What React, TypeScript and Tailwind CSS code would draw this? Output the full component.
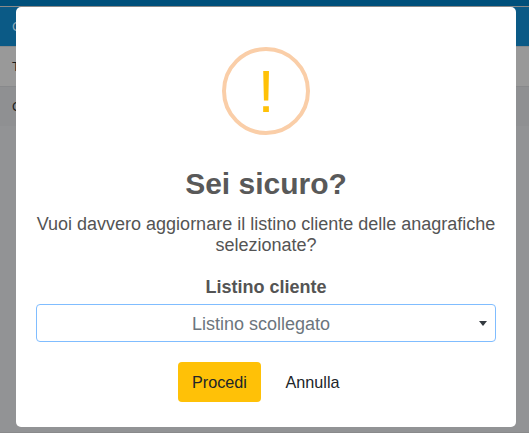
function Backdrop() {
  return (
    <div className="col-start-1 row-start-1 flex h-[433px] flex-col overflow-hidden bg-[#929395] text-[13px] text-[#1b1d20]">
      <div className="h-1.5 shrink-0 bg-[#00507b]" />
      <div className="h-px shrink-0 bg-[#8a8a89]" />
      <div className="flex h-[39px] shrink-0 items-center bg-[#0b5a86] pl-3 text-[#8fa9b8]">Codice</div>
      <div className="flex h-10 shrink-0 items-center border-t border-[#8a8b8c] bg-[#999999] pl-3">Tipo</div>
      <div className="flex h-10 shrink-0 items-center border-t border-[#88898b] bg-[#8f9092] pl-3">Cliente</div>
      <div className="flex-1" />
      <div className="h-px shrink-0 bg-[#898a8b]" />
    </div>
  );
}

export default function App() {
  return (
    <div className="grid h-[433px] w-[529px] overflow-hidden font-['Liberation_Sans',Arial,sans-serif]">
      <Backdrop />
      <div
        role="dialog"
        aria-labelledby="dialog-title"
        className="z-10 col-start-1 row-start-1 ml-4 mt-[7px] flex h-[420px] w-[500px] flex-col items-center rounded-[5px] bg-white px-5 pt-10 text-center text-[#545454]"
      >
        <div className="flex size-[88px] shrink-0 items-center justify-center rounded-full border-4 border-[#facea8] pt-0.5 text-[60px] leading-[80px] text-[#ffc107]">
          !
        </div>
        <h2 id="dialog-title" className="mt-[31px] text-[30px] font-bold leading-9 text-[#595959]">
          Sei sicuro?
        </h2>
        <p className="mt-3 w-[460px] text-lg leading-[21px]">
          Vuoi davvero aggiornare il listino cliente delle anagrafiche selezionate?
        </p>
        <label className="mt-[21px] text-lg font-bold leading-[21px]">Listino cliente</label>
        <button
          type="button"
          className="mt-1.5 flex h-[38px] w-[460px] shrink-0 items-center rounded-[4px] border border-[#80bdff] bg-white px-2"
        >
          <span className="flex-1 pr-0.5 pt-0.5 text-center text-lg leading-[27px] text-[#6c757d]">
            Listino scollegato
          </span>
          <span className="border-x-4 border-t-[5px] border-x-transparent border-t-[#343a40]" />
        </button>
        <div className="mt-5 flex h-10 gap-2.5 text-[16.2px] text-[#212529]">
          <button type="button" className="w-[83px] rounded-[4px] bg-[#ffc107] pt-px">
            Procedi
          </button>
          <button type="button" className="w-[83px] rounded-[4px] pt-px">
            Annulla
          </button>
        </div>
      </div>
    </div>
  );
}
